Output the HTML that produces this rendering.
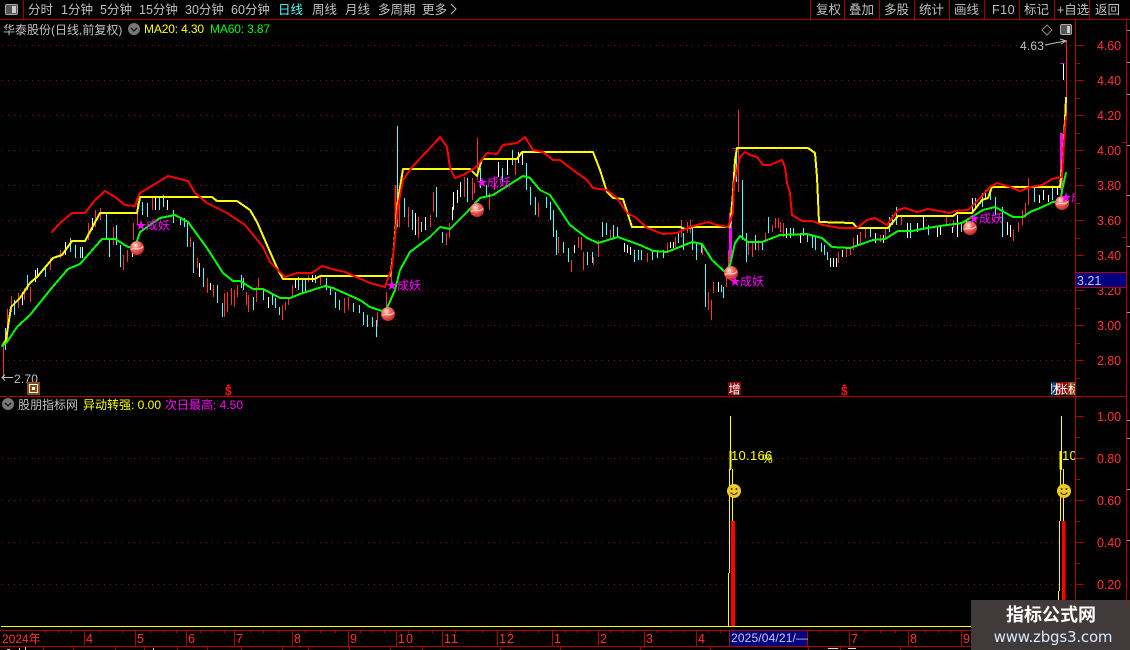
<!DOCTYPE html>
<html><head><meta charset="utf-8"><style>
html,body{margin:0;padding:0;background:#000;width:1130px;height:650px;overflow:hidden}
svg{display:block}
text{font-family:"Liberation Sans","WenQuanYi Zen Hei","Noto Sans CJK SC",sans-serif;font-size:12px}
.t{fill:#c0c0c0;font-size:12.5px}
.ax{fill:#ff3232;font-size:12.5px;letter-spacing:-.1px}
.d{fill:#ff3232;font-size:12.5px}
.m{fill:#ff00ff;font-size:12px}
.s{fill:#ff00ff;font-size:11px;text-anchor:middle}
</style></head><body>
<svg width="1130" height="650" viewBox="0 0 1130 650" xmlns="http://www.w3.org/2000/svg">
<defs>
<radialGradient id="b" cx="38%" cy="32%" r="75%"><stop offset="0" stop-color="#ffe8e0"/><stop offset=".4" stop-color="#f46a60"/><stop offset="1" stop-color="#c02020"/></radialGradient>
<clipPath id="c"><rect x="0" y="20" width="1075" height="376"/></clipPath>
<clipPath id="c2"><rect x="0" y="397" width="1075" height="233"/></clipPath>
<g id="ball"><circle r="7" fill="url(#b)"/><path d="M-6 1.500C-2-1 2 3 6-1.500" stroke="#ffd8d0" stroke-width="1.200" fill="none" opacity=".9"/></g>
<g id="sm"><circle r="7" fill="#f0c820"/><circle cx="-2.400" cy="-2" r="1" fill="#333"/><circle cx="2.400" cy="-2" r="1" fill="#333"/><path d="M-3.500 1.500Q0 5.500 3.500 1.500" stroke="#333" fill="none" stroke-width="1"/></g>
</defs>

<!-- toolbar -->
<path d="M0 19.500H1130M23.500 0V19M810.500 0V19M844.500 0V19M879.500 0V19M914.500 0V19M949.500 0V19M984.500 0V19M1019.500 0V19M1054.500 0V19M1089.500 0V19" stroke="#a00000" fill="none" shape-rendering="crispEdges"/>
<rect x="5.500" y="4.500" width="12" height="10" rx="1.500" fill="#555" stroke="#aaa"/><rect x="12" y="6" width="4" height="7" fill="#ccc"/>
<g>
<text class="t" x="28" y="14">分时</text><text class="t" x="61" y="14">1分钟</text><text class="t" x="100" y="14">5分钟</text><text class="t" x="139" y="14">15分钟</text><text class="t" x="185" y="14">30分钟</text><text class="t" x="231" y="14">60分钟</text>
<text class="t" x="278" y="14" style="fill:#54fcfc">日线</text><text class="t" x="312" y="14">周线</text><text class="t" x="345" y="14">月线</text><text class="t" x="378" y="14">多周期</text><text class="t" x="422" y="14">更多</text>
<path d="M451 4L456 9L451 14" stroke="#c0c0c0" fill="none"/>
<text class="t" x="816" y="14">复权</text><text class="t" x="849" y="14">叠加</text><text class="t" x="884" y="14">多股</text><text class="t" x="919" y="14">统计</text><text class="t" x="954" y="14">画线</text><text class="t" x="992" y="14" style="letter-spacing:.5px">F10</text><text class="t" x="1024" y="14">标记</text><text class="t" x="1057" y="14">+自选</text><text class="t" x="1095" y="14">返回</text>
</g>

<!-- legend -->
<text class="t" x="3" y="34" style="font-size:12px">华泰股份(日线,前复权)</text>
<circle cx="134" cy="29" r="6" fill="#777"/><path d="M131 28l3 3 3-3" stroke="#111" fill="none" stroke-width="1.300"/>
<text x="144" y="33" fill="#ffff00" style="letter-spacing:-.15px">MA20: 4.30</text><text x="210" y="33" fill="#00ff00" style="letter-spacing:-.15px">MA60: 3.87</text>
<path d="M1047 25l5 5-5 5-5-5z" fill="none" stroke="#888"/>
<rect x="1060.500" y="24.500" width="11" height="10" rx="1.500" fill="#555" stroke="#aaa"/><rect x="1067" y="26" width="3" height="7" fill="#ccc"/>

<!-- grid -->
<g stroke="#8c1414" stroke-dasharray="1 5" shape-rendering="crispEdges" fill="none">
<path d="M2 45.500H1075M2 80.500H1075M2 115.500H1075M2 150.500H1075M2 185.500H1075M2 220.500H1075M2 255.500H1075M2 290.500H1075M2 325.500H1075M2 360.500H1075"/>
<path d="M2 458.500H1075M2 500.500H1075M2 542.500H1075M2 584.500H1075"/>
</g>

<!-- axes -->
<path d="M1075.500 19V650M1126.500 19V650M0 396.500H1126M0 630.500H1075M0 646.500H1075" stroke="#b00000" fill="none" shape-rendering="crispEdges"/>
<path d="M1075 45.500h9M1075 80.500h9M1075 115.500h9M1075 150.500h9M1075 185.500h9M1075 220.500h9M1075 255.500h9M1075 290.500h9M1075 325.500h9M1075 360.500h9M1075 416.500h9M1075 458.500h9M1075 500.500h9M1075 542.500h9M1075 584.500h9M1075 63.500h5M1075 98.500h5M1075 133.500h5M1075 168.500h5M1075 203.500h5M1075 238.500h5M1075 273.500h5M1075 308.500h5M1075 343.500h5M1075 378.500h5M1075 437.500h5M1075 479.500h5M1075 521.500h5M1075 563.500h5M1075 605.500h5M1122 142.500h4M1122 237.500h4" stroke="#b00000" fill="none" shape-rendering="crispEdges"/>
<path d="M1127 30.500h3M1127 62.500h3M1127 94.500h3M1127 145.500h3M1127 195.500h3M1127 246.500h3M1127 312.500h3M1127 420.500h3M1127 438.500h3M1127 489.500h3M1127 540.500h3" stroke="#999" fill="none" shape-rendering="crispEdges"/>
<g>
<text class="ax" x="1097" y="50">4.60</text><text class="ax" x="1097" y="85">4.40</text><text class="ax" x="1097" y="120">4.20</text><text class="ax" x="1097" y="155">4.00</text><text class="ax" x="1097" y="190">3.80</text><text class="ax" x="1097" y="225">3.60</text><text class="ax" x="1097" y="260">3.40</text><text class="ax" x="1097" y="295">3.20</text><text class="ax" x="1097" y="330">3.00</text><text class="ax" x="1097" y="365">2.80</text>
<text class="ax" x="1097" y="421">1.00</text><text class="ax" x="1097" y="463">0.80</text><text class="ax" x="1097" y="505">0.60</text><text class="ax" x="1097" y="547">0.40</text><text class="ax" x="1097" y="589">0.20</text>
</g>
<rect x="1075.500" y="272.500" width="51" height="15" fill="#000080" stroke="#b00000"/>
<text x="1077" y="285" fill="#c8c8d8" style="font-size:12.500px">3.21</text>

<!-- candles -->
<g clip-path="url(#c)" fill="none" stroke-width="1" transform="translate(.5 0)">
<path stroke="#54fcfc" d="M5 328V350M14 300V315M27 275V290M45 268V277M70 238V252M75 245V258M80 247V258M106 213V238M109 238V257M116 225V245M120 245V267M142 202V215M147 203V217M159 197V210M163 195V207M173 210V223M180 218V225M184 218V227M187 222V247M193 242V273M203 268V287M217 285V303M222 303V317M241 275V288M243 278V290M253 297V310M263 290V300M272 295V305M275 298V308M279 307V315M298 277V290M302 280V292M305 278V292M315 275V283M326 278V290M330 287V295M335 292V308M339 300V310M353 303V312M359 305V313M363 312V325M367 315V327M372 317V327M376 320V337M397 126V227M404 198V217M412 210V230M421 222V232M436 187V217M442 232V243M467 178V202M480 168V188M486 185V197M502 168V182M512 150V165M526 163V190M530 187V205M535 197V215M546 197V208M550 202V220M553 210V237M556 230V255M563 242V253M568 248V262M587 252V265M592 252V263M602 222V237M606 223V235M613 225V238M617 227V237M634 250V262M638 250V260M641 250V260M652 252V260M657 250V258M663 250V258M678 233V243M683 233V250M692 227V250M696 243V260M701 243V253M705 264V307M721 285V292M723 287V298M736 148V182M742 180V240M746 233V262M755 235V250M762 242V250M768 217V233M790 228V238M793 228V236M803 228V236M807 233V242M812 235V248M815 237V250M821 243V252M824 245V255M827 252V260M870 227V237M889 217V232M892 215V225M896 207V225M910 223V238M928 225V235M961 223V232M975 198V210M982 193V207M990 192V200M995 197V215M1002 207V237M1034 188V202M1052 187V200"/>
<path stroke="#ff3232" d="M3 345V377M7 309V340M11 296V312M18 293V308M24 288V300M30 287V302M50 258V270M60 250V258M88 223V240M95 210V227M100 208V220M113 227V245M123 255V270M127 250V262M133 223V240M137 203V225M152 198V210M190 237V247M197 258V268M207 278V293M213 285V297M224 293V317M227 292V312M231 288V305M234 290V307M237 285V297M246 292V305M248 295V312M256 287V302M258 278V290M282 305V320M285 302V310M288 297V305M292 285V297M308 275V282M320 277V285M344 298V313M348 297V310M377 312V327M386 292V308M391 258V283M399 193V227M408 207V227M418 217V238M430 215V227M433 192V212M446 233V245M449 223V238M464 177V197M472 178V200M474 183V193M477 138V180M489 193V210M494 177V190M515 160V175M538 203V217M558 237V253M571 260V272M578 237V248M581 237V250M583 252V270M593 257V265M598 240V257M610 230V238M647 253V262M667 243V252M675 237V247M681 220V237M687 222V233M690 220V233M702 243V255M708 292V310M711 300V320M713 282V293M726 278V287M728 250V277M738 110V192M748 243V255M752 243V257M758 240V250M765 233V242M772 225V232M775 218V228M778 218V228M780 222V232M783 223V237M838 252V263M846 248V257M850 247V255M853 238V250M860 232V243M865 228V238M880 235V242M885 228V240M901 215V225M946 217V225M953 220V228M1013 230V241M1018 222V232M1022 210V225M1025 203V218M1028 178V205"/>
<path stroke="#fff" d="M22 292V305M35 270V282M37 268V278M65 242V255M82 247V258M92 218V230M132 247V257M155 197V210M167 200V210M199 263V277M210 283V290M268 297V308M295 280V288M312 275V282M415 213V235M425 217V230M452 207V220M453 192V210M457 190V203M460 182V197M498 162V177M507 160V175M518 152V163M522 153V165M574 245V253M624 243V252M627 245V253M630 247V255M670 242V248M673 242V248M718 282V292M786 228V238M800 233V243M830 258V267M833 258V267M836 258V267M842 250V257M857 235V245M875 233V243M883 235V243M907 223V238M917 223V232M923 217V230M937 227V237M940 225V235M952 227V233M957 215V237M966 220V227M972 198V213M985 190V200M1007 222V235M1010 225V237M1039 195V203M1043 190V200M1048 195V202M1057 188V195M1063 63V80"/>
<path stroke="#ff00ff" stroke-width="3" d="M1061 133V190M730 213V262"/>
<path stroke="#ff00ff" d="M732 148.500H736M1060 63.500H1064"/>
<path stroke="#ff2020" stroke-width="2" d="M395 185V227"/>
<path stroke="#ff2020" d="M1066 40V120"/>
</g>

<!-- lines -->
<g clip-path="url(#c)" fill="none" stroke-width="2" stroke-linejoin="round" stroke-linecap="round" shape-rendering="crispEdges">
<path stroke="#ffff00" d="M2 346L6 340L11 307L20 298L30 283L37 277L53 258L62 255L72 241L85 241L100 213L137 213L140 197L212 197L217 201L237 201L250 210L257 222L267 245L278 270L283 279L315 279L320 276L390 276L393 257L398 200L403 169L470 169L477 176L482 159L517 159L522 152L593 152L600 170L607 192L613 198L623 199L632 227L680 227L685 229L693 227L730 227L733 193L735 160L737 148L808 148L815 153L817 177L819 222L853 223L857 228L888 228L898 216L953 216L957 213L972 213L982 200L988 198L992 187L1060 187L1063 157L1065 120L1066 98"/>
<path stroke="#ff0000" d="M52 232L60 223L72 213L85 213L95 200L105 191L115 197L125 205L135 206L137 200L140 193L150 187L168 176L188 181L195 193L207 203L227 213L245 225L263 247L270 262L285 277L297 273L312 273L322 266L332 269L345 272L370 283L385 287L392 267L398 207L403 180L412 167L430 148L440 137L447 147L450 168L455 178L463 175L475 168L480 162L487 153L497 154L503 145L517 143L525 137L533 150L543 152L553 160L560 160L573 170L587 180L593 188L607 190L617 198L627 213L635 217L647 228L663 234L677 233L690 227L708 222L717 225L728 227L733 213L734 183L740 157L745 152L750 155L757 157L763 165L770 165L782 160L785 167L787 183L790 193L792 215L802 221L812 221L823 225L840 228L857 228L867 220L875 218L887 225L898 210L905 208L917 212L928 209L950 213L955 211L968 210L980 198L990 187L997 183L1010 187L1020 191L1030 187L1042 185L1052 179L1062 177L1064 143L1066 117"/>
<path stroke="#00ff00" d="M2 346L7 342L17 327L30 315L50 290L68 269L80 264L102 239L115 239L128 247L135 247L140 232L160 218L175 215L188 222L207 248L223 273L233 281L240 281L253 289L263 289L280 298L290 298L300 294L325 286L333 288L360 300L370 307L382 311L387 308L395 290L400 270L410 252L430 237L440 227L450 229L467 212L480 198L493 195L512 183L523 176L530 178L540 190L550 195L570 225L587 238L598 243L618 237L640 245L653 251L667 252L692 242L702 244L712 260L725 272L730 265L735 243L740 236L748 242L762 242L780 235L807 234L822 238L832 247L850 248L873 240L885 239L898 231L912 231L927 228L947 225L962 223L970 218L983 210L995 207L1013 217L1023 217L1030 212L1040 208L1053 202L1061 203L1062 190L1066 173"/>
</g>

<!-- balls & labels -->
<g clip-path="url(#c)">
<use href="#ball" x="137" y="248"/><use href="#ball" x="388" y="314"/><use href="#ball" x="477" y="210"/><use href="#ball" x="731" y="273"/><use href="#ball" x="970" y="228"/><use href="#ball" x="1062" y="203"/>
<text class="s" x="141" y="229">★</text><text class="m" x="146" y="229.500">成妖</text>
<text class="s" x="392" y="289">★</text><text class="m" x="397" y="289.500">成妖</text>
<text class="s" x="482" y="186">★</text><text class="m" x="487" y="186.500">成妖</text>
<text class="s" x="735" y="285">★</text><text class="m" x="740" y="285.500">成妖</text>
<text class="s" x="974" y="222">★</text><text class="m" x="979" y="222.500">成妖</text>
<text class="s" x="1066" y="201">★</text><text class="m" x="1071" y="201.500">成妖</text>
</g>
<text x="1020" y="50" fill="#c0c0c0" style="letter-spacing:.2px">4.63</text>
<path d="M1045 45L1065 41M1060 39L1066 41L1061 44" stroke="#c0c0c0" fill="none"/>
<text x="14" y="383" fill="#c0c0c0" style="letter-spacing:.2px">2.70</text>
<path d="M2 377.500H13M5 374.500L2 377.500L5 380.500" stroke="#c0c0c0" fill="none"/>

<!-- event marks -->
<rect x="27" y="382" width="13" height="13" fill="#8a4a10"/><rect x="29" y="384" width="9" height="9" fill="#fff"/><rect x="30" y="385" width="7" height="7" fill="#8a4a10"/><rect x="32" y="387" width="3" height="3" fill="#fff"/>
<text x="225" y="395" fill="#ff1010" style="font-size:12px;font-weight:bold">$</text><path d="M228.500 384l-2 2h4z" fill="#ff1010"/>
<text x="841" y="395" fill="#ff1010" style="font-size:12px;font-weight:bold">$</text><path d="M844.500 384l-2 2h4z" fill="#ff1010"/>
<rect x="728" y="382" width="13" height="13" fill="#8a0808"/><text x="728.500" y="393.500" fill="#fff" style="font-size:12px">增</text>
<rect x="1051" y="382" width="5" height="13" fill="#103870"/><rect x="1056" y="382" width="12" height="13" fill="#8a0808"/><rect x="1068" y="382" width="7" height="13" fill="#8a4a10"/>
<svg x="1051" y="382" width="24" height="13" viewBox="1051 382 24 13"><text x="1047" y="393.500" fill="#fff" style="font-size:12px">财</text><text x="1056" y="393.500" fill="#fff" style="font-size:12px">张</text><text x="1068" y="393.500" fill="#fff" style="font-size:12px">标</text></svg>

<!-- lower legend -->
<circle cx="8" cy="404" r="6" fill="#777"/><path d="M5 403l3 3 3-3" stroke="#111" fill="none" stroke-width="1.300"/>
<text class="t" x="18" y="409" style="font-size:12px">股朋指标网</text>
<text x="83" y="409" fill="#ffff00">异动转强: 0.00</text>
<text x="165" y="409" fill="#ff00ff">次日最高: 4.50</text>

<!-- lower chart -->
<g clip-path="url(#c2)" shape-rendering="crispEdges" fill="none">
<path stroke="#ffff00" d="M1 626.500H1075"/>
<path stroke="#ffff00" d="M730.500 416V470M729.500 469V573M732.500 469V521M728.500 573V626"/>
<path stroke="#ffff00" stroke-width="2" d="M730.500 451V469"/>
<rect x="731" y="521" width="4" height="105" fill="#ff0000"/>
<path stroke="#ffff00" d="M1061.500 416V470M1060.500 469V521M1063.500 469V521M1059.500 521V591M1058.500 591V626"/>
<path stroke="#ffff00" stroke-width="2" d="M1060.500 451V469"/>
<rect x="1062" y="521" width="3.500" height="105" fill="#ff0000"/>
</g>
<g clip-path="url(#c2)">
<text x="731" y="460" fill="#ffff00" style="font-size:13px;letter-spacing:.3px">10.166</text>
<text x="762" y="463" fill="#ffff00" style="font-size:12px">%</text>
<text x="1062" y="460" fill="#ffff00" style="font-size:13px;letter-spacing:.3px">10.166</text>
<use href="#sm" x="734" y="491"/><use href="#sm" x="1064" y="491"/>
</g>

<!-- date axis -->
<path d="M84.500 631V646M135.500 631V646M186.500 631V646M234.500 631V646M292.500 631V646M348.500 631V646M396.500 631V646M442.500 631V646M497.500 631V646M552.500 631V646M598.500 631V646M644.500 631V646M696.500 631V646M849.500 631V646M908.500 631V646M961.500 631V646M43.500 646V650M73.500 646V650M115.500 646V650M144.500 646V650M177.500 646V650M207.500 646V650M241.500 646V650M282.500 646V650M308.500 646V650M349.500 646V650M390.500 646V650M422.500 646V650M500.500 646V650M560.500 646V650M640.500 646V650M710.500 646V650M808.500 646V650M840.500 646V650M900.500 646V650M45.500 631v2M58.500 631v2M71.500 631v2M100.500 631v2M122.500 631v2M150.500 631v2M163.500 631v2M176.500 631v2M200.500 631v2M212.500 631v2M224.500 631v2M250.500 631v2M263.500 631v2M278.500 631v2M305.500 631v2M320.500 631v2M335.500 631v2M360.500 631v2M372.500 631v2M384.500 631v2M408.500 631v2M420.500 631v2M432.500 631v2M455.500 631v2M468.500 631v2M482.500 631v2M510.500 631v2M524.500 631v2M538.500 631v2M565.500 631v2M577.500 631v2M588.500 631v2M610.500 631v2M622.500 631v2M633.500 631v2M657.500 631v2M670.500 631v2M683.500 631v2M708.500 631v2M720.500 631v2M820.500 631v2M835.500 631v2M865.500 631v2M880.500 631v2M895.500 631v2M925.500 631v2M938.500 631v2M950.500 631v2" stroke="#b00000" fill="none" shape-rendering="crispEdges"/>
<text class="d" x="2" y="643" style="font-size:12px">2024年</text><text class="d" x="86" y="643">4</text><text class="d" x="137" y="643">5</text><text class="d" x="188" y="643">6</text><text class="d" x="236" y="643">7</text><text class="d" x="294" y="643">8</text><text class="d" x="350" y="643">9</text><text class="d" x="398" y="643" style="letter-spacing:1px">10</text><text class="d" x="444" y="643" style="letter-spacing:1px">11</text><text class="d" x="499" y="643" style="letter-spacing:1px">12</text><text class="d" x="554" y="643">1</text><text class="d" x="600" y="643">2</text><text class="d" x="646" y="643">3</text><text class="d" x="698" y="643">4</text><text class="d" x="851" y="643">7</text><text class="d" x="910" y="643">8</text><text class="d" x="963" y="643">9</text>
<rect x="729.500" y="630.500" width="78" height="16" fill="#000080" stroke="#b00000"/>
<text x="731" y="642" fill="#c8c8e0" style="font-size:12px;letter-spacing:.15px">2025/04/21/—</text>
<path d="M7 649.500h3M19.500 648v2M25.500 647v3M153.500 648v2M828 648.500h10M848 648.500h8" stroke="#ddd" fill="none"/>

<!-- watermark -->
<rect x="971" y="600" width="159" height="50" fill="#403a3a"/>
<text x="1051" y="621" text-anchor="middle" fill="#fff" style="font-size:18px;font-weight:bold;font-family:'Noto Sans CJK SC','WenQuanYi Zen Hei',sans-serif">指标公式网</text>
<text x="1053" y="642" text-anchor="middle" fill="#d8eaff" style="font-size:15px;font-family:'DejaVu Sans',sans-serif;letter-spacing:-.2px">www.zbgs3.com</text>
</svg>
</body></html>
